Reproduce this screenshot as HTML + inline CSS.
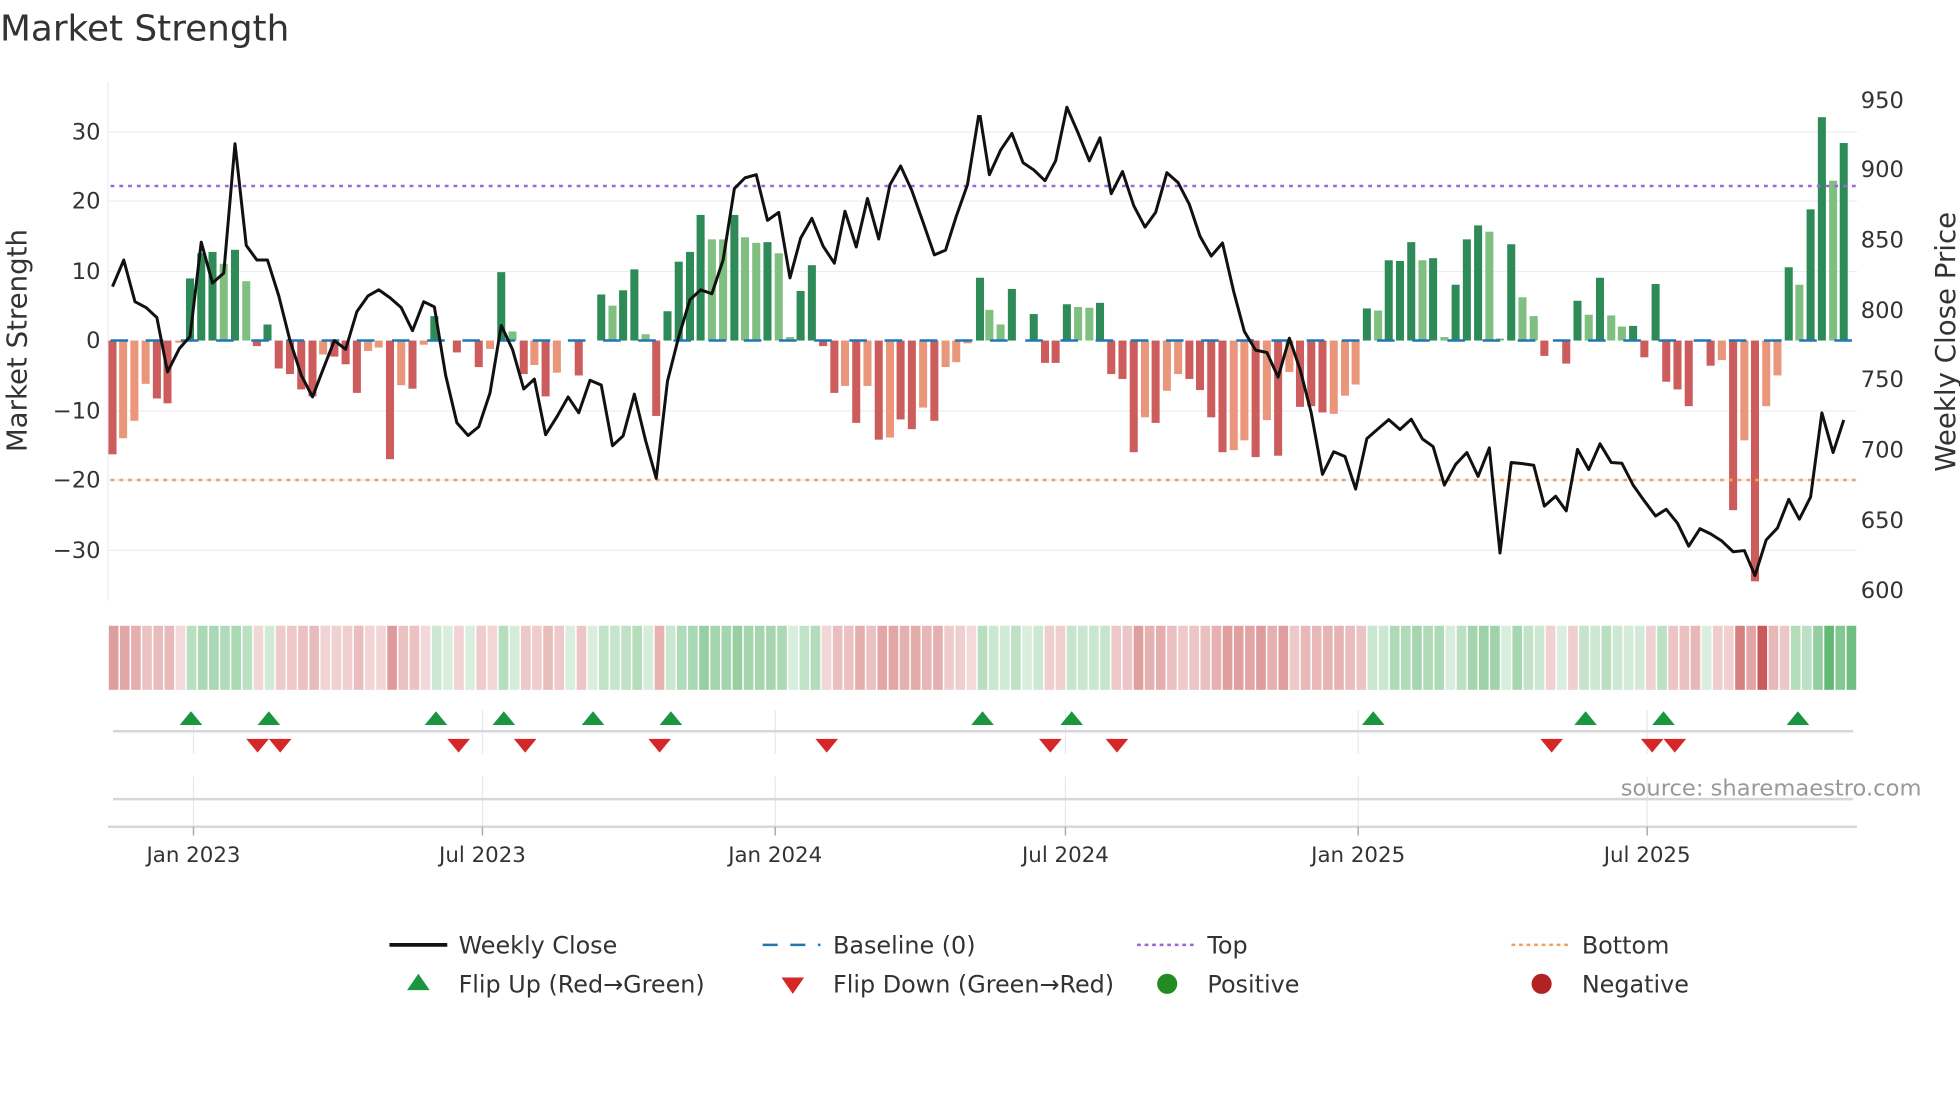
<!DOCTYPE html>
<html><head><meta charset="utf-8"><style>
html,body{margin:0;padding:0;background:#fff;width:1960px;height:1102px;overflow:hidden}
svg{display:block}
text{font-family:"DejaVu Sans","Liberation Sans",sans-serif;fill:#333}
</style></head><body>
<svg id="s" width="1960" height="1102" viewBox="0 0 1560 877" xmlns="http://www.w3.org/2000/svg">
<text x="0" y="32" font-size="28.5">Market Strength</text>
<g stroke="#ebedf0" stroke-width="1">
<line x1="86" x2="1478" y1="105" y2="105"/><line x1="86" x2="1478" y1="160" y2="160"/><line x1="86" x2="1478" y1="216" y2="216"/><line x1="86" x2="1478" y1="327" y2="327"/><line x1="86" x2="1478" y1="382" y2="382"/><line x1="86" x2="1478" y1="438" y2="438"/>
<line x1="86" x2="86" y1="65" y2="478"/>
</g>
<g font-size="18" text-anchor="end">
<text x="80" y="111">30</text><text x="80" y="166">20</text><text x="80" y="222">10</text><text x="80" y="277">0</text><text x="80" y="333">−10</text><text x="80" y="388">−20</text><text x="80" y="444">−30</text>
</g>
<g font-size="18">
<text x="1481" y="86">950</text><text x="1481" y="141">900</text><text x="1481" y="197">850</text><text x="1481" y="253">800</text><text x="1481" y="308">750</text><text x="1481" y="364">700</text><text x="1481" y="420">650</text><text x="1481" y="476">600</text>
</g>
<text transform="translate(21,271) rotate(-90)" font-size="22" text-anchor="middle">Market Strength</text>
<text transform="translate(1556,272) rotate(-90)" font-size="22" text-anchor="middle">Weekly Close Price</text>
<g id="bars"></g>
<line x1="88" x2="1478" y1="271" y2="271" stroke="#1f77b4" stroke-width="2" stroke-dasharray="14,14"/>
<line x1="88" x2="1478" y1="148" y2="148" stroke="#9966dd" stroke-width="2" stroke-dasharray="3,4"/>
<line x1="88" x2="1478" y1="382" y2="382" stroke="#f0a060" stroke-width="2" stroke-dasharray="3,4"/>
<g fill="none" stroke="#111" stroke-width="3" stroke-linejoin="round">
<polyline vector-effect="non-scaling-stroke" transform="scale(0.49744,0.3159)" points="180,722 198,655 216,760 234,775 251,800 268,937 287,878 304,848 322,610 340,713 358,688 376,362 394,618 411,655 428,655 446,745 464,858 482,945 500,1000 517,930 535,858 553,880 571,785 589,745 606,730 624,750 642,775 660,833 678,760 695,773 713,945 731,1065 749,1097 766,1075 784,990 802,820 820,880 838,980 855,955 873,1095 891,1050 909,1000 926,1040 944,958 962,970 980,1123 997,1098 1015,993 1033,1110 1050,1205 1068,960 1086,848 1104,755 1121,730 1139,740 1157,655 1175,475 1192,448 1210,440 1228,555 1246,535 1264,700 1281,600 1299,550 1317,620 1335,663 1352,532 1370,622 1388,500 1406,602 1424,465 1441,418 1459,480 1477,560 1495,642 1513,630 1530,545 1548,465 1566,290"/>
<polyline vector-effect="non-scaling-stroke" transform="translate(780,0) scale(0.49744,0.3159)" points="0,290 15,440 33,378 51,336 69,410 86,428 104,455 121,405 139,270 157,335 175,405 192,347 210,488 228,432 246,518 264,572 281,535 299,435 317,460 335,515 352,595 370,645 388,612 406,735 423,835 441,882 459,888 477,950 495,852 512,930 530,1040 548,1195 566,1138 584,1150 601,1232 619,1105 637,1080 654,1057 672,1082 690,1056 708,1106 725,1125 743,1222 761,1170 779,1140 797,1200 815,1128 832,1393 850,1165 868,1168 886,1172 903,1275 921,1250 938,1287 956,1132 974,1183 992,1118 1010,1165 1027,1167 1045,1222 1063,1262 1081,1300 1098,1283 1116,1318 1134,1376 1152,1332 1169,1345 1187,1363 1205,1390 1223,1387 1240,1450 1258,1360 1276,1330 1294,1258 1311,1308 1329,1252 1347,1040 1365,1140 1382,1058"/>
</g>
<g id="heat"></g>
<g stroke="#e6e9ee" stroke-width="1">
<line x1="154" x2="154" y1="565" y2="600"/><line x1="384" x2="384" y1="565" y2="600"/><line x1="617" x2="617" y1="565" y2="600"/><line x1="848" x2="848" y1="565" y2="600"/><line x1="1081" x2="1081" y1="565" y2="600"/><line x1="1311" x2="1311" y1="565" y2="600"/>
<line x1="154" x2="154" y1="618" y2="658"/><line x1="384" x2="384" y1="618" y2="658"/><line x1="617" x2="617" y1="618" y2="658"/><line x1="848" x2="848" y1="618" y2="658"/><line x1="1081" x2="1081" y1="618" y2="658"/><line x1="1311" x2="1311" y1="618" y2="658"/>
</g>
<line x1="90" x2="1475" y1="582" y2="582" stroke="#d5d7da" stroke-width="2"/>
<line x1="90" x2="1475" y1="636" y2="636" stroke="#d5d7da" stroke-width="2"/>
<line x1="86" x2="1478" y1="658" y2="658" stroke="#d5d7da" stroke-width="2"/>
<g stroke="#aaa" stroke-width="1.2">
<line x1="154" x2="154" y1="658" y2="665"/><line x1="384" x2="384" y1="658" y2="665"/><line x1="617" x2="617" y1="658" y2="665"/><line x1="848" x2="848" y1="658" y2="665"/><line x1="1081" x2="1081" y1="658" y2="665"/><line x1="1311" x2="1311" y1="658" y2="665"/>
</g>
<g id="flips"></g>
<text x="1290" y="633" font-size="18" fill="#999" style="fill:#999">source: sharemaestro.com</text>
<g font-size="17" text-anchor="middle">
<text x="154" y="686">Jan 2023</text><text x="384" y="686">Jul 2023</text><text x="617" y="686">Jan 2024</text><text x="848" y="686">Jul 2024</text><text x="1081" y="686">Jan 2025</text><text x="1311" y="686">Jul 2025</text>
</g>
<g font-size="19">
<line x1="310" x2="356" y1="752" y2="752" stroke="#111" stroke-width="3"/>
<text x="365" y="759">Weekly Close</text>
<line x1="607" x2="653" y1="752" y2="752" stroke="#1f77b4" stroke-width="2" stroke-dasharray="12,10"/>
<text x="663" y="759">Baseline (0)</text>
<line x1="905" x2="950" y1="752" y2="752" stroke="#9966dd" stroke-width="2" stroke-dasharray="3,3"/>
<text x="961" y="759">Top</text>
<line x1="1203" x2="1248" y1="752" y2="752" stroke="#f0a060" stroke-width="2" stroke-dasharray="3,3"/>
<text x="1259" y="759">Bottom</text>
<polygon points="324,788 342,788 333,775" fill="#1a9641"/>
<text x="365" y="790">Flip Up (Red→Green)</text>
<polygon points="622,778 640,778 631,791" fill="#d62728"/>
<text x="663" y="790">Flip Down (Green→Red)</text>
<circle cx="929" cy="783" r="8" fill="#228b22"/>
<text x="961" y="790">Positive</text>
<circle cx="1227" cy="783" r="8" fill="#b22222"/>
<text x="1259" y="790">Negative</text>
</g>
</svg>
<script>
var L=[[180,-16.3,'r'],[197,-14,'s'],[215,-11.5,'s'],[233,-6.2,'s'],[251,-8.3,'r'],[268,-9,'r'],[287,-0.3,'s'],[304,8.9,'d'],[322,12.5,'d'],[340,12.7,'d'],[358,11,'l'],[376,13,'d'],[394,8.5,'l'],[411,-0.8,'r'],[428,2.3,'d'],[446,-4,'r'],[464,-4.8,'r'],[482,-7,'r'],[500,-8,'r'],[517,-2,'s'],[535,-2.3,'r'],[553,-3.4,'r'],[571,-7.5,'r'],[589,-1.5,'s'],[606,-1,'s'],[624,-17,'r'],[642,-6.4,'s'],[660,-6.9,'r'],[678,-0.6,'s'],[695,3.5,'d'],[713,0,'d'],[731,-1.7,'r'],[749,0,'r'],[766,-3.8,'r'],[784,-1.2,'s'],[802,9.8,'d'],[820,1.3,'l'],[838,-4.8,'r'],[855,-3.5,'s'],[873,-8,'r'],[891,-4.6,'s'],[909,0,'s'],[926,-5,'r'],[944,0,'r'],[962,6.6,'d'],[980,5,'l'],[997,7.2,'d'],[1015,10.2,'d'],[1033,0.9,'l'],[1050,-10.8,'r'],[1068,4.2,'d'],[1086,11.3,'d'],[1104,12.7,'d'],[1121,18,'d'],[1139,14.5,'l'],[1157,14.5,'l'],[1175,18,'d'],[1192,14.8,'l'],[1210,14,'l'],[1228,14.1,'d'],[1246,12.5,'l'],[1264,0.5,'l'],[1281,7.1,'d'],[1299,10.8,'d'],[1317,-0.8,'r'],[1335,-7.5,'r'],[1352,-6.5,'s'],[1370,-11.8,'r'],[1388,-6.5,'s'],[1406,-14.2,'r'],[1424,-13.9,'s'],[1441,-11.3,'r'],[1459,-12.7,'r'],[1477,-9.6,'s'],[1495,-11.5,'r'],[1513,-3.8,'s'],[1530,-3.1,'s'],[1548,-0.4,'s']];
var R=[[0,9,'d'],[15,4.4,'l'],[33,2.3,'l'],[51,7.4,'d'],[69,0,'d'],[86,3.8,'d'],[104,-3.2,'r'],[121,-3.2,'r'],[139,5.2,'d'],[157,4.8,'l'],[175,4.7,'l'],[192,5.4,'d'],[210,-4.8,'r'],[228,-5.5,'r'],[246,-16,'r'],[264,-11,'s'],[281,-11.8,'r'],[299,-7.2,'s'],[317,-4.8,'s'],[335,-5.5,'r'],[352,-7.1,'r'],[370,-11,'r'],[388,-16,'r'],[406,-15.7,'s'],[423,-14.3,'s'],[441,-16.7,'r'],[459,-11.4,'s'],[477,-16.5,'r'],[495,-4.5,'s'],[512,-9.5,'r'],[530,-9.4,'r'],[548,-10.3,'r'],[566,-10.5,'s'],[584,-7.9,'s'],[601,-6.3,'s'],[619,4.6,'d'],[637,4.3,'l'],[654,11.5,'d'],[672,11.4,'d'],[690,14.1,'d'],[708,11.5,'l'],[725,11.8,'d'],[743,0.5,'l'],[761,8,'d'],[779,14.5,'d'],[797,16.5,'d'],[815,15.6,'l'],[832,0.3,'l'],[850,13.8,'d'],[868,6.2,'l'],[886,3.5,'l'],[903,-2.2,'r'],[921,0,'r'],[938,-3.3,'r'],[956,5.7,'d'],[974,3.7,'l'],[992,9,'d'],[1010,3.6,'l'],[1027,2,'l'],[1045,2.1,'d'],[1063,-2.4,'r'],[1081,8.1,'d'],[1098,-5.9,'r'],[1116,-7,'r'],[1134,-9.4,'r'],[1152,0,'r'],[1169,-3.6,'r'],[1187,-2.8,'s'],[1205,-24.3,'r'],[1223,-14.3,'s'],[1240,-34.5,'r'],[1258,-9.4,'s'],[1276,-5,'s'],[1294,10.5,'d'],[1311,8,'l'],[1329,18.8,'d'],[1347,32,'d'],[1365,22.9,'l'],[1382,28.3,'d']];
var C={d:'#2e8b57',l:'#7fbf7f',r:'#cd5c5c',s:'#e9967a'};
var all=[];L.forEach(function(b){all.push([b[0]/2.0103,b[1],b[2]]);});
R.forEach(function(b){all.push([780+b[0]/2.0103,b[1],b[2]]);});
var ns='http://www.w3.org/2000/svg',g=document.getElementById('bars'),h=document.getElementById('heat');
function el(p,t,a){var e=document.createElementNS(ns,t);for(var k in a)e.setAttribute(k,a[k]);p.appendChild(e);return e;}
all.forEach(function(b){var x=b[0],v=b[1],u=5.555;if(Math.abs(v)<0.05)return;
var y=v>0?271-v*u:271,hh=Math.abs(v)*u;el(g,'rect',{x:x-3.2,y:y,width:6.4,height:hh,fill:C[b[2]]});});
var n=all.length,x0=86,w=(1478-86)/n;
all.forEach(function(b,i){var v=b[1],a=Math.min(0.95,0.2+Math.abs(v)/30*0.6);
var col=v>=0?'rgba(70,170,90,'+a+')':'rgba(195,70,70,'+a+')';
el(h,'rect',{x:x0+i*w+0.6,y:498,width:w-1.2,height:51,fill:col});});
var f=document.getElementById('flips');
[152,214,347,401,472,534,782,853,1093,1262,1324,1431].forEach(function(x){el(f,'polygon',{points:(x-9)+',577 '+(x+9)+',577 '+x+',566',fill:'#1a9641'});});
[205,223,365,418,525,658,836,889,1235,1315,1333].forEach(function(x){el(f,'polygon',{points:(x-9)+',588 '+(x+9)+',588 '+x+',599',fill:'#d62728'});});
</script>
</body></html>
